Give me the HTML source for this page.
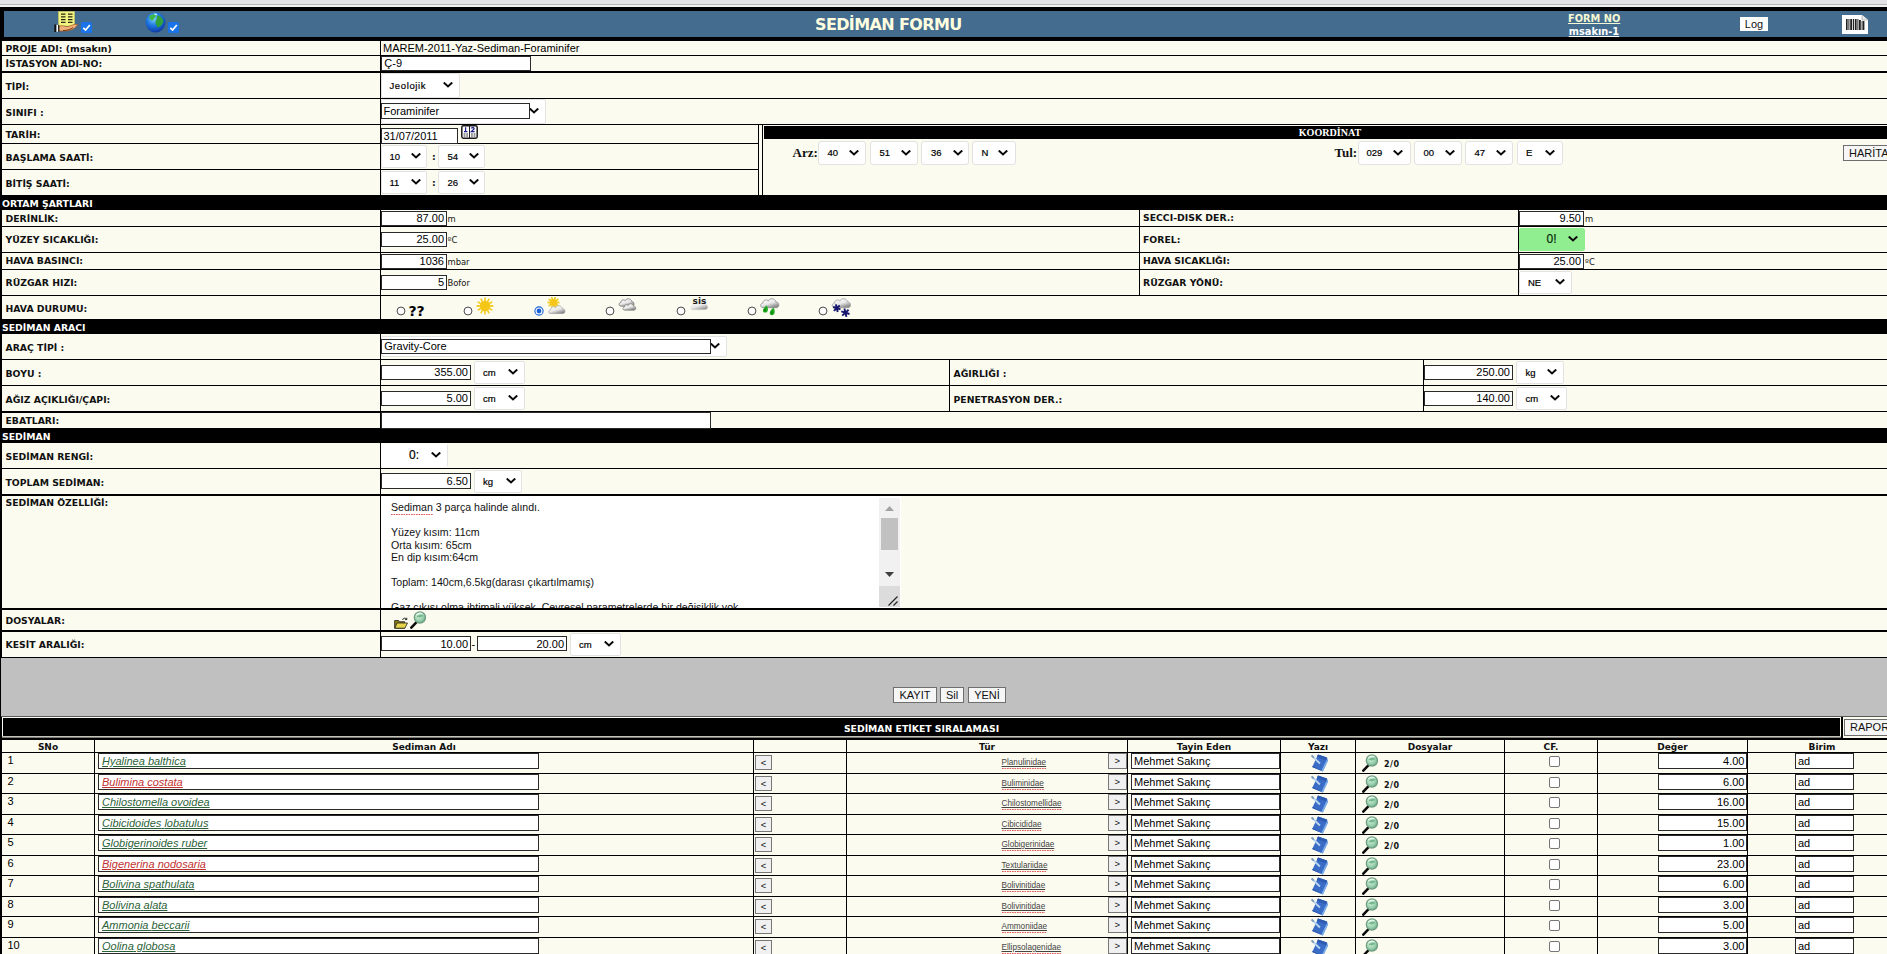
<!DOCTYPE html>
<html lang="tr"><head><meta charset="utf-8"><title>SEDİMAN FORMU</title>
<style>
html,body{margin:0;padding:0}
body{width:1887px;height:954px;overflow:hidden;background:#000;position:relative;font-family:"Liberation Sans",sans-serif;font-size:11px;color:#000}
div,svg.ic{position:absolute;box-sizing:content-box}
.c{background:#FBFBF0}
.t{white-space:nowrap}
.lb{font-family:"DejaVu Sans",sans-serif;font-weight:bold;font-size:9.3px;color:#111}
.bd{font-family:"DejaVu Sans",sans-serif;font-weight:bold;font-size:9.3px;color:#fff}
.th{font-family:"DejaVu Sans",sans-serif;font-weight:bold;font-size:9px;color:#111;text-align:center}
.un{font-family:"DejaVu Sans",sans-serif;font-size:8.4px;color:#111}
.fc{font-family:"DejaVu Sans",sans-serif;font-weight:bold;font-size:8px;color:#111;letter-spacing:0.55px}
.ttl{font-family:"DejaVu Sans",sans-serif;font-weight:bold;font-size:16px;letter-spacing:-0.62px;color:#ffffe0}
.fno{font-family:"DejaVu Sans Condensed","DejaVu Sans",sans-serif;font-stretch:condensed;font-weight:bold;font-size:10.9px;text-decoration:underline;width:52px;text-align:center}
.kd{font-family:"Liberation Serif",serif;font-weight:bold;font-size:10.1px;color:#fff}
.sb{font-family:"Liberation Serif",serif;font-weight:bold;font-size:13px;color:#111}
.qq{font-family:"DejaVu Sans",sans-serif;font-weight:bold;font-size:14px;color:#000}
.ar{font-size:11px}
.tur{font-size:8.2px;color:#444;text-decoration:underline}
.in{background:#fff;border:1px solid #2a2a2a;font-size:11px;padding:0 2px 0 1.5px;white-space:nowrap;overflow:hidden;box-sizing:border-box}
.in.it{font-style:italic}
.sp{text-decoration:underline;text-decoration-thickness:0.8px}
.g{color:#2c6238}.r{color:#c23030}
.sq{background:linear-gradient(90deg,#e25a5a 55%,transparent 55%) 0 100%/2.5px 1px repeat-x;padding-bottom:1.5px}
.sp.g,.sp.r{text-decoration:underline}
.sel{background:#fff;border:1px solid #e2e2e2;border-radius:2px;font-size:9.5px;color:#000;-webkit-text-stroke:0.2px #000}
.sel span{position:absolute;top:0}
.sel i{position:absolute;width:10px;height:6px;line-height:0}
.chv{display:block}
.btn{background:#f6f6f6;border:1px solid #6e6e6e;font-size:11px;text-align:center;color:#111;white-space:nowrap;overflow:hidden}
.btn.sm{font-size:9.5px;background:#f0f0f0;border-color:#777}
.cb{width:9px;height:9px;background:#fff;border:1px solid #767676;border-radius:2px}
.ta{background:#fff;font-size:10.6px;line-height:12.5px;padding:5px 0 0 10px;box-sizing:border-box;overflow:hidden;white-space:nowrap;color:#111}
.ic{line-height:0}
</style></head>
<body>
<div style="left:0px;top:0px;width:1887px;height:4px;background:#e3e3e5;"></div>
<div style="left:0px;top:4px;width:1887px;height:1px;background:#b6b6b6;"></div>
<div style="left:0px;top:5px;width:1887px;height:2px;background:#f0f0f0;"></div>
<div style="left:4px;top:11px;width:1883px;height:26px;background:#446C8F;"></div>
<div class="ic" style="left:54px;top:11px"><svg width="25" height="22" viewBox="0 0 25 22"><rect x="4.5" y="0.5" width="16" height="14.5" fill="#f3f382" stroke="#c9c95a" stroke-width="0.6"/><g stroke="#2a2a10" stroke-width="1.25"><path d="M7 3h4.5M14 3h4.5M7 5.8h4.5M14 5.8h4.5M7 8.6h4.5M14 8.6h4.5M7 11.4h4.5M14 11.4h4.5"/></g><path d="M5 15.5 C8 13.5 11 16 14 15.5 C17 15 20 12.5 23.5 13.5 C22 17 17 19.5 12 20 L5 20 Z" fill="#f0b27a" stroke="#a35a22" stroke-width="0.7"/><path d="M9 19.5 C13 19.8 17 18 19 16.5" stroke="#7a3a10" stroke-width="1" fill="none"/><rect x="0.3" y="13.5" width="2.2" height="7.5" fill="#111"/><rect x="2.5" y="13.8" width="1.6" height="7" fill="#fff"/><rect x="4.1" y="13.8" width="1.2" height="7" fill="#222"/></svg></div>
<div class="ic" style="left:81px;top:22px"><svg width="11" height="11" viewBox="0 0 11 11"><rect width="11" height="11" rx="1.5" fill="#1a73e8"/><path d="M2.3 5.8 L4.6 8 L8.8 3" fill="none" stroke="#fff" stroke-width="1.7"/></svg></div>
<div class="ic" style="left:145px;top:12px"><svg width="21" height="21" viewBox="0 0 21 21"><defs><radialGradient id="gg" cx="0.42" cy="0.32" r="0.75"><stop offset="0" stop-color="#7fd0ff"/><stop offset="0.45" stop-color="#1f78e0"/><stop offset="1" stop-color="#0a2f9a"/></radialGradient></defs><circle cx="10.5" cy="10.5" r="10" fill="url(#gg)"/><path d="M4 5 C6 2 10 1.5 12 3 C10.5 5 9 5.5 8.5 8 C7 9 5.5 8.5 4 5Z" fill="#3fb84a"/><path d="M12 4 C15 3 18 6 18.5 10 C17 13 15 15 12.5 15.5 C12 13 10 12 10.5 9.5 C11 7.5 12.5 6.5 12 4Z" fill="#2fa03c"/><path d="M9 1.8 C11 1.2 12.5 2 12 3.2 C10.5 3.5 9.5 3 9 1.8Z" fill="#b8f0ff"/></svg></div>
<div class="ic" style="left:168px;top:22px"><svg width="11" height="11" viewBox="0 0 11 11"><rect width="11" height="11" rx="1.5" fill="#1a73e8"/><path d="M2.3 5.8 L4.6 8 L8.8 3" fill="none" stroke="#fff" stroke-width="1.7"/></svg></div>
<div class="t ttl" style="left:815px;top:12px;height:26px;line-height:26px;">SEDİMAN FORMU</div>
<div class="t fno" style="left:1568px;top:12px;height:13px;line-height:13px;color:#f4f8d4">FORM NO</div>
<div class="t fno" style="left:1568px;top:25px;height:13px;line-height:13px;color:#fff">msakın-1</div>
<div class="btn" style="left:1740px;top:17px;width:28px;height:14px;line-height:14px;border:0;background:#fff">Log</div>
<div class="ic" style="left:1842px;top:15px"><svg width="26" height="19" viewBox="0 0 26 19"><rect width="26" height="19" fill="#fff"/><path d="M20 0 L26 5 L26 0Z" fill="#456D90"/><path d="M20 0 L20 5 L26 5" fill="#e8e8e8" stroke="#888" stroke-width="0.5"/><g fill="#222"><rect x="4" y="4" width="1.6" height="11"/><rect x="6.4" y="4" width="1" height="11"/><rect x="8.2" y="4" width="2" height="11"/><rect x="11" y="4" width="1" height="11"/><rect x="12.8" y="4" width="1.8" height="11"/><rect x="15.4" y="4" width="1" height="11"/><rect x="17" y="5" width="1.8" height="10"/><rect x="19.6" y="6" width="1" height="9"/><rect x="21" y="6" width="1.4" height="9"/></g></svg></div>
<div class="c" style="left:2px;top:41px;width:378px;height:14px"></div>
<div class="c" style="left:381px;top:41px;width:1506px;height:14px"></div>
<div class="t lb" style="left:5.5px;top:42px;height:14px;line-height:14px;">PROJE ADI: (msakın)</div>
<div class="t ar" style="left:383px;top:41px;height:14px;line-height:14px;">MAREM-2011-Yaz-Sediman-Foraminifer</div>
<div class="c" style="left:2px;top:56px;width:378px;height:15px"></div>
<div class="c" style="left:381px;top:56px;width:1506px;height:15px"></div>
<div class="t lb" style="left:5.5px;top:56px;height:15px;line-height:15px;">İSTASYON ADI-NO:</div>
<div class="in " style="left:381px;top:56px;width:150px;height:15px;line-height:13px;text-align:left;padding-left:2.3px">Ç-9</div>
<div class="c" style="left:2px;top:73px;width:378px;height:25px"></div>
<div class="c" style="left:381px;top:73px;width:1506px;height:25px"></div>
<div class="t lb" style="left:5.5px;top:74px;height:25px;line-height:25px;">TİPİ:</div>
<div class="sel" style="left:381px;top:73px;width:77px;height:23px;line-height:23px;background:#fff;"><span style="left:7.5px;letter-spacing:0.62px;">Jeolojik</span><i style="left:60.5px;top:8.3px"><svg class="chv" width="10" height="6" viewBox="0 0 10 6"><path d="M1.5 1.2 L5 4.5 L8.5 1.2" fill="none" stroke="#0a0a0a" stroke-width="2" stroke-linecap="square"/></svg></i></div>
<div class="c" style="left:2px;top:99px;width:378px;height:25px"></div>
<div class="c" style="left:381px;top:99px;width:1506px;height:25px"></div>
<div class="t lb" style="left:5.5px;top:100px;height:25px;line-height:25px;">SINIFI :</div>
<div class="sel" style="left:381px;top:99px;width:163px;height:23px;line-height:23px;background:#fff;"><span style="left:-382px;"></span><i style="left:146.5px;top:8.3px"><svg class="chv" width="10" height="6" viewBox="0 0 10 6"><path d="M1.5 1.2 L5 4.5 L8.5 1.2" fill="none" stroke="#0a0a0a" stroke-width="2" stroke-linecap="square"/></svg></i></div>
<div class="in " style="left:381px;top:103px;width:149px;height:16px;line-height:14px;text-align:left;">Foraminifer</div>
<div class="c" style="left:2px;top:125px;width:378px;height:18px"></div>
<div class="c" style="left:381px;top:125px;width:377px;height:18px"></div>
<div class="t lb" style="left:5.5px;top:126px;height:18px;line-height:18px;">TARİH:</div>
<div class="c" style="left:2px;top:144px;width:378px;height:25px"></div>
<div class="c" style="left:381px;top:144px;width:377px;height:25px"></div>
<div class="t lb" style="left:5.5px;top:145px;height:25px;line-height:25px;">BAŞLAMA SAATİ:</div>
<div class="c" style="left:2px;top:170px;width:378px;height:25px"></div>
<div class="c" style="left:381px;top:170px;width:377px;height:25px"></div>
<div class="t lb" style="left:5.5px;top:171px;height:25px;line-height:25px;">BİTİŞ SAATİ:</div>
<div class="c" style="left:759px;top:125px;width:3px;height:70px"></div>
<div class="c" style="left:763px;top:125px;width:1124px;height:70px"></div>
<div style="left:764px;top:126px;width:1123px;height:13px;background:#000;"></div>
<div class="t kd" style="left:764px;top:126px;height:13px;line-height:13px;width:1132px;text-align:center">KOORDİNAT</div>
<div class="in " style="left:381px;top:128px;width:77px;height:16px;line-height:14px;text-align:left;">31/07/2011</div>
<div class="ic" style="left:461px;top:125px"><svg width="17" height="14" viewBox="0 0 17 14"><rect x="0.8" y="0.8" width="15.4" height="12.4" rx="1.6" fill="#fff" stroke="#1a1a1a" stroke-width="1.5"/><path d="M8.5 1v12" stroke="#1a1a1a" stroke-width="1"/><g stroke="#1c1c8c" stroke-width="1.2" fill="none"><path d="M4.6 2.3v4.2M3 6.6h3.4M10.3 3.4c0.8-1.4 3.2-1 2.8 0.6l-2.8 2.6h3.3"/></g><g stroke="#333" stroke-width="1"><path d="M2.6 9h1.8M5.2 9h1.8M2.6 11h1.8M5.2 11h1.8M10 9h1.8M12.6 9h1.8M10 11h1.8M12.6 11h1.8"/></g></svg></div>
<div class="sel" style="left:381px;top:145px;width:44px;height:21px;line-height:21px;background:#fff;"><span style="left:7.5px;">10</span><i style="left:28.5px;top:7.3px"><svg class="chv" width="10" height="6" viewBox="0 0 10 6"><path d="M1.5 1.2 L5 4.5 L8.5 1.2" fill="none" stroke="#0a0a0a" stroke-width="2" stroke-linecap="square"/></svg></i></div>
<div class="t lb" style="left:432px;top:145px;height:23px;line-height:23px;">:</div>
<div class="sel" style="left:438px;top:145px;width:45px;height:21px;line-height:21px;background:#fff;"><span style="left:8.5px;">54</span><i style="left:29.5px;top:7.3px"><svg class="chv" width="10" height="6" viewBox="0 0 10 6"><path d="M1.5 1.2 L5 4.5 L8.5 1.2" fill="none" stroke="#0a0a0a" stroke-width="2" stroke-linecap="square"/></svg></i></div>
<div class="sel" style="left:381px;top:171px;width:44px;height:21px;line-height:21px;background:#fff;"><span style="left:7.5px;">11</span><i style="left:28.5px;top:7.3px"><svg class="chv" width="10" height="6" viewBox="0 0 10 6"><path d="M1.5 1.2 L5 4.5 L8.5 1.2" fill="none" stroke="#0a0a0a" stroke-width="2" stroke-linecap="square"/></svg></i></div>
<div class="t lb" style="left:432px;top:171px;height:23px;line-height:23px;">:</div>
<div class="sel" style="left:438px;top:171px;width:45px;height:21px;line-height:21px;background:#fff;"><span style="left:8.5px;">26</span><i style="left:29.5px;top:7.3px"><svg class="chv" width="10" height="6" viewBox="0 0 10 6"><path d="M1.5 1.2 L5 4.5 L8.5 1.2" fill="none" stroke="#0a0a0a" stroke-width="2" stroke-linecap="square"/></svg></i></div>
<div class="t sb" style="left:792.5px;top:141px;height:24px;line-height:24px;">Arz:</div>
<div class="sel" style="left:818px;top:141px;width:46px;height:22px;line-height:22px;background:#fff;border-radius:3px"><span style="left:8.5px;">40</span><i style="left:29.5px;top:7.8px"><svg class="chv" width="10" height="6" viewBox="0 0 10 6"><path d="M1.5 1.2 L5 4.5 L8.5 1.2" fill="none" stroke="#0a0a0a" stroke-width="2" stroke-linecap="square"/></svg></i></div>
<div class="sel" style="left:870px;top:141px;width:46px;height:22px;line-height:22px;background:#fff;border-radius:3px"><span style="left:8.5px;">51</span><i style="left:29.5px;top:7.8px"><svg class="chv" width="10" height="6" viewBox="0 0 10 6"><path d="M1.5 1.2 L5 4.5 L8.5 1.2" fill="none" stroke="#0a0a0a" stroke-width="2" stroke-linecap="square"/></svg></i></div>
<div class="sel" style="left:921px;top:141px;width:46px;height:22px;line-height:22px;background:#fff;border-radius:3px"><span style="left:9px;">36</span><i style="left:30.5px;top:7.8px"><svg class="chv" width="10" height="6" viewBox="0 0 10 6"><path d="M1.5 1.2 L5 4.5 L8.5 1.2" fill="none" stroke="#0a0a0a" stroke-width="2" stroke-linecap="square"/></svg></i></div>
<div class="sel" style="left:972px;top:141px;width:42px;height:22px;line-height:22px;background:#fff;border-radius:3px"><span style="left:8.5px;">N</span><i style="left:25px;top:7.8px"><svg class="chv" width="10" height="6" viewBox="0 0 10 6"><path d="M1.5 1.2 L5 4.5 L8.5 1.2" fill="none" stroke="#0a0a0a" stroke-width="2" stroke-linecap="square"/></svg></i></div>
<div class="t sb" style="left:1334.5px;top:141px;height:24px;line-height:24px;">Tul:</div>
<div class="sel" style="left:1358px;top:141px;width:51px;height:22px;line-height:22px;background:#fff;border-radius:3px"><span style="left:7.5px;">029</span><i style="left:34px;top:7.8px"><svg class="chv" width="10" height="6" viewBox="0 0 10 6"><path d="M1.5 1.2 L5 4.5 L8.5 1.2" fill="none" stroke="#0a0a0a" stroke-width="2" stroke-linecap="square"/></svg></i></div>
<div class="sel" style="left:1414px;top:141px;width:46px;height:22px;line-height:22px;background:#fff;border-radius:3px"><span style="left:8.5px;">00</span><i style="left:29.5px;top:7.8px"><svg class="chv" width="10" height="6" viewBox="0 0 10 6"><path d="M1.5 1.2 L5 4.5 L8.5 1.2" fill="none" stroke="#0a0a0a" stroke-width="2" stroke-linecap="square"/></svg></i></div>
<div class="sel" style="left:1465px;top:141px;width:46px;height:22px;line-height:22px;background:#fff;border-radius:3px"><span style="left:8.5px;">47</span><i style="left:29.5px;top:7.8px"><svg class="chv" width="10" height="6" viewBox="0 0 10 6"><path d="M1.5 1.2 L5 4.5 L8.5 1.2" fill="none" stroke="#0a0a0a" stroke-width="2" stroke-linecap="square"/></svg></i></div>
<div class="sel" style="left:1517px;top:141px;width:44px;height:22px;line-height:22px;background:#fff;border-radius:3px"><span style="left:8px;">E</span><i style="left:27px;top:7.8px"><svg class="chv" width="10" height="6" viewBox="0 0 10 6"><path d="M1.5 1.2 L5 4.5 L8.5 1.2" fill="none" stroke="#0a0a0a" stroke-width="2" stroke-linecap="square"/></svg></i></div>
<div class="btn" style="left:1843px;top:145px;width:60px;height:14px;line-height:14px;text-align:left;padding-left:5px">HARİTA</div>
<div class="t bd" style="left:2px;top:196px;height:15px;line-height:15px;">ORTAM ŞARTLARI</div>
<div class="c" style="left:2px;top:210px;width:378px;height:16px"></div>
<div class="c" style="left:381px;top:210px;width:758px;height:16px"></div>
<div class="c" style="left:1140px;top:210px;width:378px;height:16px"></div>
<div class="c" style="left:1519px;top:210px;width:368px;height:16px"></div>
<div class="t lb" style="left:5.5px;top:211px;height:16px;line-height:16px;">DERİNLİK:</div>
<div class="t lb" style="left:1143px;top:210px;height:16px;line-height:16px;">SECCI-DISK DER.:</div>
<div class="in " style="left:381px;top:211px;width:66px;height:15px;line-height:13px;text-align:right;">87.00</div>
<div class="t un" style="left:447.5px;top:211px;height:16px;line-height:16px;">m</div>
<div class="c" style="left:2px;top:227px;width:378px;height:25px"></div>
<div class="c" style="left:381px;top:227px;width:758px;height:25px"></div>
<div class="c" style="left:1140px;top:227px;width:378px;height:25px"></div>
<div class="c" style="left:1519px;top:227px;width:368px;height:25px"></div>
<div class="t lb" style="left:5.5px;top:227px;height:25px;line-height:25px;">YÜZEY SICAKLIĞI:</div>
<div class="t lb" style="left:1143px;top:227px;height:25px;line-height:25px;">FOREL:</div>
<div class="in " style="left:381px;top:232px;width:66px;height:15px;line-height:13px;text-align:right;">25.00</div>
<div class="t un" style="left:447.5px;top:232px;height:16px;line-height:16px;">ºC</div>
<div class="c" style="left:2px;top:253px;width:378px;height:16px"></div>
<div class="c" style="left:381px;top:253px;width:758px;height:16px"></div>
<div class="c" style="left:1140px;top:253px;width:378px;height:16px"></div>
<div class="c" style="left:1519px;top:253px;width:368px;height:16px"></div>
<div class="t lb" style="left:5.5px;top:253px;height:16px;line-height:16px;">HAVA BASINCI:</div>
<div class="t lb" style="left:1143px;top:253px;height:16px;line-height:16px;">HAVA SICAKLIĞI:</div>
<div class="in " style="left:381px;top:254px;width:66px;height:15px;line-height:13px;text-align:right;">1036</div>
<div class="t un" style="left:447.5px;top:254px;height:16px;line-height:16px;">mbar</div>
<div class="c" style="left:2px;top:270px;width:378px;height:25px"></div>
<div class="c" style="left:381px;top:270px;width:758px;height:25px"></div>
<div class="c" style="left:1140px;top:270px;width:378px;height:25px"></div>
<div class="c" style="left:1519px;top:270px;width:368px;height:25px"></div>
<div class="t lb" style="left:5.5px;top:270px;height:25px;line-height:25px;">RÜZGAR HIZI:</div>
<div class="t lb" style="left:1143px;top:270px;height:25px;line-height:25px;">RÜZGAR YÖNÜ:</div>
<div class="in " style="left:381px;top:275px;width:66px;height:15px;line-height:13px;text-align:right;">5</div>
<div class="t un" style="left:447.5px;top:275px;height:16px;line-height:16px;">Bofor</div>
<div class="in " style="left:1519px;top:211px;width:65px;height:15px;line-height:13px;text-align:right;">9.50</div>
<div class="t un" style="left:1585px;top:211px;height:16px;line-height:16px;">m</div>
<div class="sel" style="left:1519px;top:228px;width:64px;height:21px;line-height:21px;background:#90ee90;border-color:#90ee90"><span style="left:26.5px;font-size:12px;color:#0c3a0c;">0!</span><i style="left:47.5px;top:7.3px"><svg class="chv" width="10" height="6" viewBox="0 0 10 6"><path d="M1.5 1.2 L5 4.5 L8.5 1.2" fill="none" stroke="#0a0a0a" stroke-width="2" stroke-linecap="square"/></svg></i></div>
<div class="in " style="left:1519px;top:254px;width:65px;height:15px;line-height:13px;text-align:right;">25.00</div>
<div class="t un" style="left:1585px;top:254px;height:16px;line-height:16px;">ºC</div>
<div class="sel" style="left:1519px;top:271px;width:51px;height:21px;line-height:21px;background:#fff;"><span style="left:8px;">NE</span><i style="left:34.5px;top:7.3px"><svg class="chv" width="10" height="6" viewBox="0 0 10 6"><path d="M1.5 1.2 L5 4.5 L8.5 1.2" fill="none" stroke="#0a0a0a" stroke-width="2" stroke-linecap="square"/></svg></i></div>
<div class="c" style="left:2px;top:296px;width:378px;height:23px"></div>
<div class="c" style="left:381px;top:296px;width:1506px;height:23px"></div>
<div class="t lb" style="left:5.5px;top:297px;height:23px;line-height:23px;">HAVA DURUMU:</div>
<div class="t bd" style="left:2px;top:320px;height:15px;line-height:15px;">SEDİMAN ARACI</div>
<div class="c" style="left:2px;top:334px;width:378px;height:25px"></div>
<div class="c" style="left:381px;top:334px;width:1506px;height:25px"></div>
<div class="t lb" style="left:5.5px;top:335px;height:25px;line-height:25px;">ARAÇ TİPİ :</div>
<div class="sel" style="left:381px;top:336px;width:344px;height:19px;line-height:19px;background:#fff;"><span style="left:-382px;"></span><i style="left:328px;top:6.3px"><svg class="chv" width="10" height="6" viewBox="0 0 10 6"><path d="M1.5 1.2 L5 4.5 L8.5 1.2" fill="none" stroke="#0a0a0a" stroke-width="2" stroke-linecap="square"/></svg></i></div>
<div class="in " style="left:381px;top:339px;width:330px;height:15px;line-height:13px;text-align:left;padding-left:2.3px">Gravity-Core</div>
<div class="c" style="left:2px;top:360px;width:378px;height:25px"></div>
<div class="c" style="left:381px;top:360px;width:568px;height:25px"></div>
<div class="c" style="left:950px;top:360px;width:473px;height:25px"></div>
<div class="c" style="left:1424px;top:360px;width:463px;height:25px"></div>
<div class="t lb" style="left:5.5px;top:361px;height:25px;line-height:25px;">BOYU :</div>
<div class="t lb" style="left:953.5px;top:361px;height:25px;line-height:25px;">AĞIRLIĞI :</div>
<div class="in " style="left:381px;top:365px;width:90px;height:15px;line-height:13px;text-align:right;">355.00</div>
<div class="sel" style="left:474px;top:361px;width:49px;height:21px;line-height:21px;background:#fff;"><span style="left:8px;">cm</span><i style="left:32.5px;top:7.3px"><svg class="chv" width="10" height="6" viewBox="0 0 10 6"><path d="M1.5 1.2 L5 4.5 L8.5 1.2" fill="none" stroke="#0a0a0a" stroke-width="2" stroke-linecap="square"/></svg></i></div>
<div class="in " style="left:1424px;top:365px;width:89px;height:15px;line-height:13px;text-align:right;">250.00</div>
<div class="sel" style="left:1516px;top:361px;width:46px;height:21px;line-height:21px;background:#fff;"><span style="left:8.5px;">kg</span><i style="left:29.5px;top:7.3px"><svg class="chv" width="10" height="6" viewBox="0 0 10 6"><path d="M1.5 1.2 L5 4.5 L8.5 1.2" fill="none" stroke="#0a0a0a" stroke-width="2" stroke-linecap="square"/></svg></i></div>
<div class="c" style="left:2px;top:386px;width:378px;height:25px"></div>
<div class="c" style="left:381px;top:386px;width:568px;height:25px"></div>
<div class="c" style="left:950px;top:386px;width:473px;height:25px"></div>
<div class="c" style="left:1424px;top:386px;width:463px;height:25px"></div>
<div class="t lb" style="left:5.5px;top:387px;height:25px;line-height:25px;">AĞIZ AÇIKLIĞI/ÇAPI:</div>
<div class="t lb" style="left:953.5px;top:387px;height:25px;line-height:25px;">PENETRASYON DER.:</div>
<div class="in " style="left:381px;top:391px;width:90px;height:15px;line-height:13px;text-align:right;">5.00</div>
<div class="sel" style="left:474px;top:387px;width:49px;height:21px;line-height:21px;background:#fff;"><span style="left:8px;">cm</span><i style="left:32.5px;top:7.3px"><svg class="chv" width="10" height="6" viewBox="0 0 10 6"><path d="M1.5 1.2 L5 4.5 L8.5 1.2" fill="none" stroke="#0a0a0a" stroke-width="2" stroke-linecap="square"/></svg></i></div>
<div class="in " style="left:1424px;top:391px;width:89px;height:15px;line-height:13px;text-align:right;">140.00</div>
<div class="sel" style="left:1516px;top:387px;width:49px;height:21px;line-height:21px;background:#fff;"><span style="left:8.5px;">cm</span><i style="left:32.5px;top:7.3px"><svg class="chv" width="10" height="6" viewBox="0 0 10 6"><path d="M1.5 1.2 L5 4.5 L8.5 1.2" fill="none" stroke="#0a0a0a" stroke-width="2" stroke-linecap="square"/></svg></i></div>
<div class="c" style="left:2px;top:412px;width:378px;height:16px"></div>
<div class="c" style="left:381px;top:412px;width:1506px;height:16px"></div>
<div class="t lb" style="left:5.5px;top:413px;height:16px;line-height:16px;">EBATLARI:</div>
<div style="left:2px;top:412px;width:378px;height:1px;background:#000;"></div>
<div class="in " style="left:381px;top:412px;width:330px;height:17px;line-height:15px;text-align:left;"></div>
<div class="t bd" style="left:2px;top:429px;height:15px;line-height:15px;">SEDİMAN</div>
<div class="c" style="left:2px;top:443px;width:378px;height:25px"></div>
<div class="c" style="left:381px;top:443px;width:1506px;height:25px"></div>
<div class="t lb" style="left:5.5px;top:444px;height:25px;line-height:25px;">SEDİMAN RENGİ:</div>
<div class="sel" style="left:381px;top:444px;width:65px;height:21px;line-height:21px;background:#fff;border-color:#fff #e4e4e4 #fff #fff"><span style="left:27px;font-size:12px;">0:</span><i style="left:48.5px;top:7.3px"><svg class="chv" width="10" height="6" viewBox="0 0 10 6"><path d="M1.5 1.2 L5 4.5 L8.5 1.2" fill="none" stroke="#0a0a0a" stroke-width="2" stroke-linecap="square"/></svg></i></div>
<div class="c" style="left:2px;top:469px;width:378px;height:25px"></div>
<div class="c" style="left:381px;top:469px;width:1506px;height:25px"></div>
<div class="t lb" style="left:5.5px;top:470px;height:25px;line-height:25px;">TOPLAM SEDİMAN:</div>
<div class="in " style="left:381px;top:473px;width:90px;height:16px;line-height:14px;text-align:right;">6.50</div>
<div class="sel" style="left:474px;top:470px;width:46px;height:21px;line-height:21px;background:#fff;"><span style="left:8px;">kg</span><i style="left:30.5px;top:7.3px"><svg class="chv" width="10" height="6" viewBox="0 0 10 6"><path d="M1.5 1.2 L5 4.5 L8.5 1.2" fill="none" stroke="#0a0a0a" stroke-width="2" stroke-linecap="square"/></svg></i></div>
<div class="c" style="left:2px;top:496px;width:378px;height:112px"></div>
<div class="c" style="left:381px;top:496px;width:1506px;height:112px"></div>
<div class="t lb" style="left:5.5px;top:496px;height:13px;line-height:13px;">SEDİMAN ÖZELLİĞİ:</div>
<div class="ta" style="left:381px;top:496px;width:498px;height:112px"><span class="sq">Sediman</span> 3 parça halinde alındı.<br><br>Yüzey kısım: 11cm<br>Orta kısım: 65cm<br>En dip kısım:64cm<br><br>Toplam: 140cm,6.5kg(darası çıkartılmamış)<br><br>Gaz çıkışı olma ihtimali yüksek. Çevresel parametrelerde bir değişiklik yok.</div>
<div style="left:879px;top:496px;width:22px;height:112px;background:#fff;"></div>
<div style="left:879px;top:498px;width:21px;height:88px;background:#f1f1f1;"></div>
<div style="left:879px;top:586px;width:21px;height:21px;background:#dcdcdc;"></div>
<div style="left:881px;top:518px;width:17px;height:32px;background:#c1c1c1;"></div>
<svg class="ic" style="left:885px;top:506px" width="9" height="5" viewBox="0 0 9 5"><path d="M0 5 L4.5 0 L9 5Z" fill="#a3a3a3"/></svg>
<svg class="ic" style="left:885px;top:572px" width="9" height="5" viewBox="0 0 9 5"><path d="M0 0 L4.5 5 L9 0Z" fill="#404040"/></svg>
<svg class="ic" style="left:887px;top:595px" width="12" height="12" viewBox="0 0 12 12"><path d="M1.5 10.5 L10.5 1.5 M6.5 10.5 L10.5 6.5" stroke="#222" stroke-width="1.2" fill="none"/></svg>
<div class="c" style="left:2px;top:610px;width:378px;height:20px"></div>
<div class="c" style="left:381px;top:610px;width:1506px;height:20px"></div>
<div class="t lb" style="left:5.5px;top:611px;height:20px;line-height:20px;">DOSYALAR:</div>
<div class="c" style="left:2px;top:632px;width:378px;height:25px"></div>
<div class="c" style="left:381px;top:632px;width:1506px;height:25px"></div>
<div class="t lb" style="left:5.5px;top:632px;height:25px;line-height:25px;">KESİT ARALIĞI:</div>
<div class="in " style="left:381px;top:636px;width:90px;height:15px;line-height:13px;text-align:right;padding-top:1px">10.00</div>
<div class="t ar" style="left:471.5px;top:637px;height:15px;line-height:15px;">-</div>
<div class="in " style="left:477px;top:636px;width:90px;height:15px;line-height:13px;text-align:right;padding-top:1px">20.00</div>
<div class="sel" style="left:570px;top:633px;width:49px;height:21px;line-height:21px;background:#fff;"><span style="left:8px;">cm</span><i style="left:32.5px;top:7.3px"><svg class="chv" width="10" height="6" viewBox="0 0 10 6"><path d="M1.5 1.2 L5 4.5 L8.5 1.2" fill="none" stroke="#0a0a0a" stroke-width="2" stroke-linecap="square"/></svg></i></div>
<div style="left:1px;top:658px;width:1886px;height:58px;background:#c0c0c0;"></div>
<div class="btn" style="left:893px;top:687px;width:42px;height:14px;line-height:14px">KAYIT</div>
<div class="btn" style="left:940px;top:687px;width:22px;height:14px;line-height:14px">Sil</div>
<div class="btn" style="left:968px;top:687px;width:36px;height:14px;line-height:14px">YENİ</div>
<svg class="ic" style="left:395.5px;top:305.5px" width="10" height="10" viewBox="0 0 10 10"><circle cx="5" cy="5" r="3.95" fill="#fdfdfd" stroke="#4a4a4a" stroke-width="1"/></svg>
<div class="t qq" style="left:408.5px;top:302px;height:19px;line-height:19px;">??</div>
<svg class="ic" style="left:462.5px;top:305.5px" width="10" height="10" viewBox="0 0 10 10"><circle cx="5" cy="5" r="3.95" fill="#fdfdfd" stroke="#4a4a4a" stroke-width="1"/></svg>
<div class="ic" style="left:476px;top:297px"><svg width="18" height="18" viewBox="0 0 18 18"><path d="M13.7 9.0L17.4 9.0M13.1 11.3L16.3 13.2M11.4 13.1L13.2 16.3M9.0 13.7L9.0 17.4M6.7 13.1L4.8 16.3M4.9 11.3L1.7 13.2M4.3 9.0L0.6 9.0M4.9 6.7L1.7 4.8M6.6 4.9L4.8 1.7M9.0 4.3L9.0 0.6M11.4 4.9L13.2 1.7M13.1 6.6L16.3 4.8" stroke="#f2cf2e" stroke-width="1.8" fill="none"/><circle cx="9" cy="9" r="5.2" fill="#f5c518"/></svg></div>
<svg class="ic" style="left:533.5px;top:305.5px" width="10" height="10" viewBox="0 0 10 10"><circle cx="5" cy="5" r="4.1" fill="#fff" stroke="#1a62d6" stroke-width="1.1"/><circle cx="5" cy="5" r="2.4" fill="#1a62d6"/></svg>
<div class="ic" style="left:546px;top:297px"><svg width="21" height="17" viewBox="0 0 21 17"><defs><linearGradient id="cg" x1="0" y1="0" x2="0.6" y2="1"><stop offset="0" stop-color="#fff"/><stop offset="0.6" stop-color="#e8e8e8"/><stop offset="1" stop-color="#8a8a8a"/></linearGradient></defs><path d="M10.6 5.5L13.5 5.5M10.0 7.3L12.4 9.0M8.5 8.4L9.4 11.2M6.5 8.4L5.6 11.2M5.0 7.3L2.6 9.0M4.4 5.5L1.5 5.5M5.0 3.7L2.6 2.0M6.5 2.6L5.6 -0.2M8.5 2.6L9.4 -0.2M10.0 3.7L12.4 2.0" stroke="#f2cf2e" stroke-width="1.8" fill="none"/><circle cx="7.5" cy="5.5" r="3.6" fill="#f5c518"/><g transform="translate(1.5,1.2) scale(1.15)"><path d="M3 13.5 C0.5 13.5 0.3 10.3 2.8 9.9 C2.6 7.6 5.6 6.6 6.9 8.3 C8 5.6 12.4 5.9 12.9 9 C15.6 8.8 16.2 13.2 13.4 13.5 Z" fill="url(#cg)" stroke="#9a9a9a" stroke-width="0.5"/></g></svg></div>
<svg class="ic" style="left:604.5px;top:305.5px" width="10" height="10" viewBox="0 0 10 10"><circle cx="5" cy="5" r="3.95" fill="#fdfdfd" stroke="#4a4a4a" stroke-width="1"/></svg>
<div class="ic" style="left:617px;top:297px"><svg width="21" height="15" viewBox="0 0 21 15"><g transform="translate(1,-5) scale(1.05)"><path d="M3 13.5 C0.5 13.5 0.3 10.3 2.8 9.9 C2.6 7.6 5.6 6.6 6.9 8.3 C8 5.6 12.4 5.9 12.9 9 C15.6 8.8 16.2 13.2 13.4 13.5 Z" fill="url(#cg)" stroke="#777" stroke-width="0.8"/></g><g transform="translate(5,1) scale(0.9)"><path d="M3 13.5 C0.5 13.5 0.3 10.3 2.8 9.9 C2.6 7.6 5.6 6.6 6.9 8.3 C8 5.6 12.4 5.9 12.9 9 C15.6 8.8 16.2 13.2 13.4 13.5 Z" fill="url(#cg)" stroke="#777" stroke-width="0.8"/></g></svg></div>
<svg class="ic" style="left:675.5px;top:305.5px" width="10" height="10" viewBox="0 0 10 10"><circle cx="5" cy="5" r="3.95" fill="#fdfdfd" stroke="#4a4a4a" stroke-width="1"/></svg>
<div class="ic" style="left:688.5px;top:296px"><svg width="21" height="16" viewBox="0 0 21 16"><g transform="translate(0.5,-2.5) scale(1.2)"><path d="M3 13.5 C0.5 13.5 0.3 10.3 2.8 9.9 C2.6 7.6 5.6 6.6 6.9 8.3 C8 5.6 12.4 5.9 12.9 9 C15.6 8.8 16.2 13.2 13.4 13.5 Z" fill="url(#cg)" stroke="#d8d8d8" stroke-width="0.4" opacity="0.85"/></g><text x="10.5" y="8" text-anchor="middle" font-family="DejaVu Sans,sans-serif" font-weight="bold" font-size="9" fill="#222">sis</text></svg></div>
<svg class="ic" style="left:746.5px;top:305.5px" width="10" height="10" viewBox="0 0 10 10"><circle cx="5" cy="5" r="3.95" fill="#fdfdfd" stroke="#4a4a4a" stroke-width="1"/></svg>
<div class="ic" style="left:759px;top:297px"><svg width="22" height="19" viewBox="0 0 22 19"><g transform="translate(0.3,-6.6) scale(1.28)"><path d="M3 13.5 C0.5 13.5 0.3 10.3 2.8 9.9 C2.6 7.6 5.6 6.6 6.9 8.3 C8 5.6 12.4 5.9 12.9 9 C15.6 8.8 16.2 13.2 13.4 13.5 Z" fill="url(#cg)" stroke="#8a8a8a" stroke-width="0.6"/></g><g fill="#22aa22"><path d="M7.6 8.4 C9.6 10.6 9.6 15.6 6 15.6 C2.6 15.6 3.6 11 7.6 8.4Z"/><path d="M14.4 10.8 C16.4 13 16.4 18.2 12.8 18.2 C9.4 18.2 10.4 13.4 14.4 10.8Z"/></g><g fill="#128a12"><ellipse cx="6" cy="13" rx="1" ry="1.5"/><ellipse cx="12.8" cy="15.6" rx="1" ry="1.5"/></g></svg></div>
<svg class="ic" style="left:817.5px;top:305.5px" width="10" height="10" viewBox="0 0 10 10"><circle cx="5" cy="5" r="3.95" fill="#fdfdfd" stroke="#4a4a4a" stroke-width="1"/></svg>
<div class="ic" style="left:830px;top:297px"><svg width="23" height="21" viewBox="0 0 23 21"><g transform="translate(1,-6.6) scale(1.28)"><path d="M3 13.5 C0.5 13.5 0.3 10.3 2.8 9.9 C2.6 7.6 5.6 6.6 6.9 8.3 C8 5.6 12.4 5.9 12.9 9 C15.6 8.8 16.2 13.2 13.4 13.5 Z" fill="url(#cg)" stroke="#9a9a9a" stroke-width="0.6"/></g><path d="M3.1 10.0L10.5 12.4M5.9 7.4L7.7 15.0M9.7 8.5L3.9 13.9" stroke="#15156e" stroke-width="1.9" fill="none"/><path d="M11.3 14.4L19.5 17.0M14.4 11.5L16.4 19.9M18.6 12.8L12.2 18.6" stroke="#15156e" stroke-width="1.9" fill="none"/></svg></div>
<div class="ic" style="left:393.5px;top:616.5px"><svg width="14" height="12" viewBox="0 0 14 12"><path d="M0.6 3.5h4l1 1.2h5v6.5h-10z" fill="#8a7a10" stroke="#222" stroke-width="0.8"/><path d="M0.8 11.2 L3 6h10.5l-2.6 5.2z" fill="#e6d44a" stroke="#222" stroke-width="0.8"/><path d="M8.5 3c0.5-2 3-2.5 4-0.8M12.8 0.8v1.8h-1.8" stroke="#111" stroke-width="0.9" fill="none"/></svg></div>
<div class="ic" style="left:410px;top:610.5px"><svg width="17" height="18" viewBox="0 0 17 18"><defs><radialGradient id="mg" cx="0.4" cy="0.35" r="0.7"><stop offset="0" stop-color="#d4f2de"/><stop offset="0.6" stop-color="#9ad0ae"/><stop offset="1" stop-color="#6aa884"/></radialGradient></defs><path d="M6.8 10.8 L1.3 16.7" stroke="#0c0c0c" stroke-width="2.5" stroke-linecap="round"/><circle cx="9.9" cy="6.5" r="5.6" fill="url(#mg)" stroke="#6f9c80" stroke-width="1.2"/><path d="M6.6 6 C7.6 3.6 11.8 3 13.4 5.2 C11.8 4.9 10.6 7 8.6 6.2 C7.9 5.9 7.3 6.3 6.6 6Z" fill="#62aa7c" opacity="0.8"/><path d="M6 4.2 C7.2 2.2 10.6 1.6 12.6 2.9" stroke="#effff4" stroke-width="1" fill="none"/></svg></div>
<div style="left:1px;top:716px;width:1886px;height:1px;background:#5a5a5a;"></div>
<div style="left:2px;top:717px;width:1839px;height:1px;background:#FBFBF0;"></div>
<div style="left:2px;top:717px;width:1px;height:20px;background:#FBFBF0;"></div>
<div style="left:1840px;top:717px;width:1px;height:20px;background:#FBFBF0;"></div>
<div style="left:2px;top:736px;width:1839px;height:1px;background:#c4c4bc;"></div>
<div style="left:2px;top:737px;width:1839px;height:1px;background:#7a7a74;"></div>
<div style="left:1843px;top:717px;width:50px;height:21px;background:#FBFBF0;"></div>
<div class="btn" style="left:1844px;top:719px;width:60px;height:15px;line-height:15px;text-align:left;padding-left:5px">RAPOR</div>
<div class="t bd" style="left:3px;top:720px;height:18px;line-height:18px;width:1837px;text-align:center">SEDİMAN ETİKET SIRALAMASI</div>
<div class="c" style="left:2px;top:740px;width:92px;height:12px"></div>
<div class="t th" style="left:2px;top:741px;height:12px;line-height:12px;width:92px">SNo</div>
<div class="c" style="left:95px;top:740px;width:658px;height:12px"></div>
<div class="t th" style="left:95px;top:741px;height:12px;line-height:12px;width:658px">Sediman Adı</div>
<div class="c" style="left:754px;top:740px;width:92px;height:12px"></div>
<div class="c" style="left:847px;top:740px;width:280px;height:12px"></div>
<div class="t th" style="left:847px;top:741px;height:12px;line-height:12px;width:280px">Tür</div>
<div class="c" style="left:1128px;top:740px;width:152px;height:12px"></div>
<div class="t th" style="left:1128px;top:741px;height:12px;line-height:12px;width:152px">Tayin Eden</div>
<div class="c" style="left:1281px;top:740px;width:74px;height:12px"></div>
<div class="t th" style="left:1281px;top:741px;height:12px;line-height:12px;width:74px">Yazı</div>
<div class="c" style="left:1356px;top:740px;width:148px;height:12px"></div>
<div class="t th" style="left:1356px;top:741px;height:12px;line-height:12px;width:148px">Dosyalar</div>
<div class="c" style="left:1505px;top:740px;width:92px;height:12px"></div>
<div class="t th" style="left:1505px;top:741px;height:12px;line-height:12px;width:92px">CF.</div>
<div class="c" style="left:1598px;top:740px;width:149px;height:12px"></div>
<div class="t th" style="left:1598px;top:741px;height:12px;line-height:12px;width:149px">Değer</div>
<div class="c" style="left:1748px;top:740px;width:148px;height:12px"></div>
<div class="t th" style="left:1748px;top:741px;height:12px;line-height:12px;width:148px">Birim</div>
<div class="c" style="left:2px;top:753px;width:92px;height:20px"></div>
<div class="c" style="left:95px;top:753px;width:658px;height:20px"></div>
<div class="c" style="left:754px;top:753px;width:92px;height:20px"></div>
<div class="c" style="left:847px;top:753px;width:280px;height:20px"></div>
<div class="c" style="left:1128px;top:753px;width:152px;height:20px"></div>
<div class="c" style="left:1281px;top:753px;width:74px;height:20px"></div>
<div class="c" style="left:1356px;top:753px;width:148px;height:20px"></div>
<div class="c" style="left:1505px;top:753px;width:92px;height:20px"></div>
<div class="c" style="left:1598px;top:753px;width:149px;height:20px"></div>
<div class="c" style="left:1748px;top:753px;width:148px;height:20px"></div>
<div class="t ar" style="left:7.5px;top:754px;height:13px;line-height:13px;">1</div>
<div class="in it" style="left:98px;top:753px;width:441px;height:16px;line-height:14px;text-align:left;padding-left:3px"><span class="sp g"><span class="sq">Hyalinea</span> <span class="sq">balthica</span></span></div>
<div class="btn sm" style="left:755px;top:755px;width:15px;height:13px;line-height:13px">&lt;</div>
<div class="t tur" style="left:1001.5px;top:756px;height:14px;line-height:14px;"><span class="sq">Planulinidae</span></div>
<div class="btn sm" style="left:1108px;top:753px;width:16.5px;height:13.5px;line-height:13px">&gt;</div>
<div class="in " style="left:1131px;top:753px;width:149px;height:16px;line-height:14px;text-align:left;padding-left:2px">Mehmet <span class="sq">Sakınç</span></div>
<div class="ic" style="left:1311px;top:754px"><svg width="18" height="18" viewBox="0 0 18 18"><path d="M7 0.4 L16 3.5 L16.8 7 L11.8 17.4 L1.2 13 L4.4 6.3 Z" fill="#3b6dc7"/><path d="M16 3.5 L16.8 7 L11.8 17.4 L10.4 16.8 L15.3 6.4 Z" fill="#7db0ec"/><path d="M7 0.4 L16 3.5 L15.3 6.4 L5.8 3 Z" fill="#2e5cb2"/><path d="M1.2 13 L11.8 17.4 L10.4 16.8 L1.8 12 Z" fill="#2a55a8"/><path d="M0.8 1.6 L8.9 9.5" stroke="#b8d6f2" stroke-width="1.9"/><path d="M0.6 1.4 L2.8 3.6" stroke="#7e9cba" stroke-width="1.9"/></svg></div>
<div class="ic" style="left:1362px;top:754px"><svg width="17" height="18" viewBox="0 0 17 18"><defs><radialGradient id="mg" cx="0.4" cy="0.35" r="0.7"><stop offset="0" stop-color="#d4f2de"/><stop offset="0.6" stop-color="#9ad0ae"/><stop offset="1" stop-color="#6aa884"/></radialGradient></defs><path d="M6.8 10.8 L1.3 16.7" stroke="#0c0c0c" stroke-width="2.5" stroke-linecap="round"/><circle cx="9.9" cy="6.5" r="5.6" fill="url(#mg)" stroke="#6f9c80" stroke-width="1.2"/><path d="M6.6 6 C7.6 3.6 11.8 3 13.4 5.2 C11.8 4.9 10.6 7 8.6 6.2 C7.9 5.9 7.3 6.3 6.6 6Z" fill="#62aa7c" opacity="0.8"/><path d="M6 4.2 C7.2 2.2 10.6 1.6 12.6 2.9" stroke="#effff4" stroke-width="1" fill="none"/></svg></div>
<div class="t fc" style="left:1384px;top:760px;height:10px;line-height:10px;">2/0</div>
<div class="cb" style="left:1549px;top:756px"></div>
<div class="in " style="left:1658px;top:753px;width:89px;height:16px;line-height:14px;text-align:right;padding-right:1.5px">4.00</div>
<div class="in " style="left:1795px;top:753px;width:59px;height:16px;line-height:14px;text-align:left;padding-left:2px">ad</div>
<div class="c" style="left:2px;top:774px;width:92px;height:19px"></div>
<div class="c" style="left:95px;top:774px;width:658px;height:19px"></div>
<div class="c" style="left:754px;top:774px;width:92px;height:19px"></div>
<div class="c" style="left:847px;top:774px;width:280px;height:19px"></div>
<div class="c" style="left:1128px;top:774px;width:152px;height:19px"></div>
<div class="c" style="left:1281px;top:774px;width:74px;height:19px"></div>
<div class="c" style="left:1356px;top:774px;width:148px;height:19px"></div>
<div class="c" style="left:1505px;top:774px;width:92px;height:19px"></div>
<div class="c" style="left:1598px;top:774px;width:149px;height:19px"></div>
<div class="c" style="left:1748px;top:774px;width:148px;height:19px"></div>
<div class="t ar" style="left:7.5px;top:775px;height:13px;line-height:13px;">2</div>
<div class="in it" style="left:98px;top:774px;width:441px;height:16px;line-height:14px;text-align:left;padding-left:3px"><span class="sp r"><span class="sq">Bulimina</span> <span class="sq">costata</span></span></div>
<div class="btn sm" style="left:755px;top:776px;width:15px;height:13px;line-height:13px">&lt;</div>
<div class="t tur" style="left:1001.5px;top:777px;height:14px;line-height:14px;"><span class="sq">Buliminidae</span></div>
<div class="btn sm" style="left:1108px;top:774px;width:16.5px;height:13.5px;line-height:13px">&gt;</div>
<div class="in " style="left:1131px;top:774px;width:149px;height:16px;line-height:14px;text-align:left;padding-left:2px">Mehmet <span class="sq">Sakınç</span></div>
<div class="ic" style="left:1311px;top:775px"><svg width="18" height="18" viewBox="0 0 18 18"><path d="M7 0.4 L16 3.5 L16.8 7 L11.8 17.4 L1.2 13 L4.4 6.3 Z" fill="#3b6dc7"/><path d="M16 3.5 L16.8 7 L11.8 17.4 L10.4 16.8 L15.3 6.4 Z" fill="#7db0ec"/><path d="M7 0.4 L16 3.5 L15.3 6.4 L5.8 3 Z" fill="#2e5cb2"/><path d="M1.2 13 L11.8 17.4 L10.4 16.8 L1.8 12 Z" fill="#2a55a8"/><path d="M0.8 1.6 L8.9 9.5" stroke="#b8d6f2" stroke-width="1.9"/><path d="M0.6 1.4 L2.8 3.6" stroke="#7e9cba" stroke-width="1.9"/></svg></div>
<div class="ic" style="left:1362px;top:775px"><svg width="17" height="18" viewBox="0 0 17 18"><defs><radialGradient id="mg" cx="0.4" cy="0.35" r="0.7"><stop offset="0" stop-color="#d4f2de"/><stop offset="0.6" stop-color="#9ad0ae"/><stop offset="1" stop-color="#6aa884"/></radialGradient></defs><path d="M6.8 10.8 L1.3 16.7" stroke="#0c0c0c" stroke-width="2.5" stroke-linecap="round"/><circle cx="9.9" cy="6.5" r="5.6" fill="url(#mg)" stroke="#6f9c80" stroke-width="1.2"/><path d="M6.6 6 C7.6 3.6 11.8 3 13.4 5.2 C11.8 4.9 10.6 7 8.6 6.2 C7.9 5.9 7.3 6.3 6.6 6Z" fill="#62aa7c" opacity="0.8"/><path d="M6 4.2 C7.2 2.2 10.6 1.6 12.6 2.9" stroke="#effff4" stroke-width="1" fill="none"/></svg></div>
<div class="t fc" style="left:1384px;top:781px;height:10px;line-height:10px;">2/0</div>
<div class="cb" style="left:1549px;top:777px"></div>
<div class="in " style="left:1658px;top:774px;width:89px;height:16px;line-height:14px;text-align:right;padding-right:1.5px">6.00</div>
<div class="in " style="left:1795px;top:774px;width:59px;height:16px;line-height:14px;text-align:left;padding-left:2px">ad</div>
<div class="c" style="left:2px;top:794px;width:92px;height:20px"></div>
<div class="c" style="left:95px;top:794px;width:658px;height:20px"></div>
<div class="c" style="left:754px;top:794px;width:92px;height:20px"></div>
<div class="c" style="left:847px;top:794px;width:280px;height:20px"></div>
<div class="c" style="left:1128px;top:794px;width:152px;height:20px"></div>
<div class="c" style="left:1281px;top:794px;width:74px;height:20px"></div>
<div class="c" style="left:1356px;top:794px;width:148px;height:20px"></div>
<div class="c" style="left:1505px;top:794px;width:92px;height:20px"></div>
<div class="c" style="left:1598px;top:794px;width:149px;height:20px"></div>
<div class="c" style="left:1748px;top:794px;width:148px;height:20px"></div>
<div class="t ar" style="left:7.5px;top:795px;height:13px;line-height:13px;">3</div>
<div class="in it" style="left:98px;top:794px;width:441px;height:16px;line-height:14px;text-align:left;padding-left:3px"><span class="sp g"><span class="sq">Chilostomella</span> <span class="sq">ovoidea</span></span></div>
<div class="btn sm" style="left:755px;top:796px;width:15px;height:13px;line-height:13px">&lt;</div>
<div class="t tur" style="left:1001.5px;top:797px;height:14px;line-height:14px;"><span class="sq">Chilostomellidae</span></div>
<div class="btn sm" style="left:1108px;top:794px;width:16.5px;height:13.5px;line-height:13px">&gt;</div>
<div class="in " style="left:1131px;top:794px;width:149px;height:16px;line-height:14px;text-align:left;padding-left:2px">Mehmet <span class="sq">Sakınç</span></div>
<div class="ic" style="left:1311px;top:795px"><svg width="18" height="18" viewBox="0 0 18 18"><path d="M7 0.4 L16 3.5 L16.8 7 L11.8 17.4 L1.2 13 L4.4 6.3 Z" fill="#3b6dc7"/><path d="M16 3.5 L16.8 7 L11.8 17.4 L10.4 16.8 L15.3 6.4 Z" fill="#7db0ec"/><path d="M7 0.4 L16 3.5 L15.3 6.4 L5.8 3 Z" fill="#2e5cb2"/><path d="M1.2 13 L11.8 17.4 L10.4 16.8 L1.8 12 Z" fill="#2a55a8"/><path d="M0.8 1.6 L8.9 9.5" stroke="#b8d6f2" stroke-width="1.9"/><path d="M0.6 1.4 L2.8 3.6" stroke="#7e9cba" stroke-width="1.9"/></svg></div>
<div class="ic" style="left:1362px;top:795px"><svg width="17" height="18" viewBox="0 0 17 18"><defs><radialGradient id="mg" cx="0.4" cy="0.35" r="0.7"><stop offset="0" stop-color="#d4f2de"/><stop offset="0.6" stop-color="#9ad0ae"/><stop offset="1" stop-color="#6aa884"/></radialGradient></defs><path d="M6.8 10.8 L1.3 16.7" stroke="#0c0c0c" stroke-width="2.5" stroke-linecap="round"/><circle cx="9.9" cy="6.5" r="5.6" fill="url(#mg)" stroke="#6f9c80" stroke-width="1.2"/><path d="M6.6 6 C7.6 3.6 11.8 3 13.4 5.2 C11.8 4.9 10.6 7 8.6 6.2 C7.9 5.9 7.3 6.3 6.6 6Z" fill="#62aa7c" opacity="0.8"/><path d="M6 4.2 C7.2 2.2 10.6 1.6 12.6 2.9" stroke="#effff4" stroke-width="1" fill="none"/></svg></div>
<div class="t fc" style="left:1384px;top:801px;height:10px;line-height:10px;">2/0</div>
<div class="cb" style="left:1549px;top:797px"></div>
<div class="in " style="left:1658px;top:794px;width:89px;height:16px;line-height:14px;text-align:right;padding-right:1.5px">16.00</div>
<div class="in " style="left:1795px;top:794px;width:59px;height:16px;line-height:14px;text-align:left;padding-left:2px">ad</div>
<div class="c" style="left:2px;top:815px;width:92px;height:19px"></div>
<div class="c" style="left:95px;top:815px;width:658px;height:19px"></div>
<div class="c" style="left:754px;top:815px;width:92px;height:19px"></div>
<div class="c" style="left:847px;top:815px;width:280px;height:19px"></div>
<div class="c" style="left:1128px;top:815px;width:152px;height:19px"></div>
<div class="c" style="left:1281px;top:815px;width:74px;height:19px"></div>
<div class="c" style="left:1356px;top:815px;width:148px;height:19px"></div>
<div class="c" style="left:1505px;top:815px;width:92px;height:19px"></div>
<div class="c" style="left:1598px;top:815px;width:149px;height:19px"></div>
<div class="c" style="left:1748px;top:815px;width:148px;height:19px"></div>
<div class="t ar" style="left:7.5px;top:816px;height:13px;line-height:13px;">4</div>
<div class="in it" style="left:98px;top:815px;width:441px;height:16px;line-height:14px;text-align:left;padding-left:3px"><span class="sp g"><span class="sq">Cibicidoides</span> <span class="sq">lobatulus</span></span></div>
<div class="btn sm" style="left:755px;top:817px;width:15px;height:13px;line-height:13px">&lt;</div>
<div class="t tur" style="left:1001.5px;top:818px;height:14px;line-height:14px;"><span class="sq">Cibicididae</span></div>
<div class="btn sm" style="left:1108px;top:815px;width:16.5px;height:13.5px;line-height:13px">&gt;</div>
<div class="in " style="left:1131px;top:815px;width:149px;height:16px;line-height:14px;text-align:left;padding-left:2px">Mehmet <span class="sq">Sakınç</span></div>
<div class="ic" style="left:1311px;top:816px"><svg width="18" height="18" viewBox="0 0 18 18"><path d="M7 0.4 L16 3.5 L16.8 7 L11.8 17.4 L1.2 13 L4.4 6.3 Z" fill="#3b6dc7"/><path d="M16 3.5 L16.8 7 L11.8 17.4 L10.4 16.8 L15.3 6.4 Z" fill="#7db0ec"/><path d="M7 0.4 L16 3.5 L15.3 6.4 L5.8 3 Z" fill="#2e5cb2"/><path d="M1.2 13 L11.8 17.4 L10.4 16.8 L1.8 12 Z" fill="#2a55a8"/><path d="M0.8 1.6 L8.9 9.5" stroke="#b8d6f2" stroke-width="1.9"/><path d="M0.6 1.4 L2.8 3.6" stroke="#7e9cba" stroke-width="1.9"/></svg></div>
<div class="ic" style="left:1362px;top:816px"><svg width="17" height="18" viewBox="0 0 17 18"><defs><radialGradient id="mg" cx="0.4" cy="0.35" r="0.7"><stop offset="0" stop-color="#d4f2de"/><stop offset="0.6" stop-color="#9ad0ae"/><stop offset="1" stop-color="#6aa884"/></radialGradient></defs><path d="M6.8 10.8 L1.3 16.7" stroke="#0c0c0c" stroke-width="2.5" stroke-linecap="round"/><circle cx="9.9" cy="6.5" r="5.6" fill="url(#mg)" stroke="#6f9c80" stroke-width="1.2"/><path d="M6.6 6 C7.6 3.6 11.8 3 13.4 5.2 C11.8 4.9 10.6 7 8.6 6.2 C7.9 5.9 7.3 6.3 6.6 6Z" fill="#62aa7c" opacity="0.8"/><path d="M6 4.2 C7.2 2.2 10.6 1.6 12.6 2.9" stroke="#effff4" stroke-width="1" fill="none"/></svg></div>
<div class="t fc" style="left:1384px;top:822px;height:10px;line-height:10px;">2/0</div>
<div class="cb" style="left:1549px;top:818px"></div>
<div class="in " style="left:1658px;top:815px;width:89px;height:16px;line-height:14px;text-align:right;padding-right:1.5px">15.00</div>
<div class="in " style="left:1795px;top:815px;width:59px;height:16px;line-height:14px;text-align:left;padding-left:2px">ad</div>
<div class="c" style="left:2px;top:835px;width:92px;height:20px"></div>
<div class="c" style="left:95px;top:835px;width:658px;height:20px"></div>
<div class="c" style="left:754px;top:835px;width:92px;height:20px"></div>
<div class="c" style="left:847px;top:835px;width:280px;height:20px"></div>
<div class="c" style="left:1128px;top:835px;width:152px;height:20px"></div>
<div class="c" style="left:1281px;top:835px;width:74px;height:20px"></div>
<div class="c" style="left:1356px;top:835px;width:148px;height:20px"></div>
<div class="c" style="left:1505px;top:835px;width:92px;height:20px"></div>
<div class="c" style="left:1598px;top:835px;width:149px;height:20px"></div>
<div class="c" style="left:1748px;top:835px;width:148px;height:20px"></div>
<div class="t ar" style="left:7.5px;top:836px;height:13px;line-height:13px;">5</div>
<div class="in it" style="left:98px;top:835px;width:441px;height:16px;line-height:14px;text-align:left;padding-left:3px"><span class="sp g"><span class="sq">Globigerinoides</span> <span class="sq">ruber</span></span></div>
<div class="btn sm" style="left:755px;top:837px;width:15px;height:13px;line-height:13px">&lt;</div>
<div class="t tur" style="left:1001.5px;top:838px;height:14px;line-height:14px;"><span class="sq">Globigerinidae</span></div>
<div class="btn sm" style="left:1108px;top:835px;width:16.5px;height:13.5px;line-height:13px">&gt;</div>
<div class="in " style="left:1131px;top:835px;width:149px;height:16px;line-height:14px;text-align:left;padding-left:2px">Mehmet <span class="sq">Sakınç</span></div>
<div class="ic" style="left:1311px;top:836px"><svg width="18" height="18" viewBox="0 0 18 18"><path d="M7 0.4 L16 3.5 L16.8 7 L11.8 17.4 L1.2 13 L4.4 6.3 Z" fill="#3b6dc7"/><path d="M16 3.5 L16.8 7 L11.8 17.4 L10.4 16.8 L15.3 6.4 Z" fill="#7db0ec"/><path d="M7 0.4 L16 3.5 L15.3 6.4 L5.8 3 Z" fill="#2e5cb2"/><path d="M1.2 13 L11.8 17.4 L10.4 16.8 L1.8 12 Z" fill="#2a55a8"/><path d="M0.8 1.6 L8.9 9.5" stroke="#b8d6f2" stroke-width="1.9"/><path d="M0.6 1.4 L2.8 3.6" stroke="#7e9cba" stroke-width="1.9"/></svg></div>
<div class="ic" style="left:1362px;top:836px"><svg width="17" height="18" viewBox="0 0 17 18"><defs><radialGradient id="mg" cx="0.4" cy="0.35" r="0.7"><stop offset="0" stop-color="#d4f2de"/><stop offset="0.6" stop-color="#9ad0ae"/><stop offset="1" stop-color="#6aa884"/></radialGradient></defs><path d="M6.8 10.8 L1.3 16.7" stroke="#0c0c0c" stroke-width="2.5" stroke-linecap="round"/><circle cx="9.9" cy="6.5" r="5.6" fill="url(#mg)" stroke="#6f9c80" stroke-width="1.2"/><path d="M6.6 6 C7.6 3.6 11.8 3 13.4 5.2 C11.8 4.9 10.6 7 8.6 6.2 C7.9 5.9 7.3 6.3 6.6 6Z" fill="#62aa7c" opacity="0.8"/><path d="M6 4.2 C7.2 2.2 10.6 1.6 12.6 2.9" stroke="#effff4" stroke-width="1" fill="none"/></svg></div>
<div class="t fc" style="left:1384px;top:842px;height:10px;line-height:10px;">2/0</div>
<div class="cb" style="left:1549px;top:838px"></div>
<div class="in " style="left:1658px;top:835px;width:89px;height:16px;line-height:14px;text-align:right;padding-right:1.5px">1.00</div>
<div class="in " style="left:1795px;top:835px;width:59px;height:16px;line-height:14px;text-align:left;padding-left:2px">ad</div>
<div class="c" style="left:2px;top:856px;width:92px;height:19px"></div>
<div class="c" style="left:95px;top:856px;width:658px;height:19px"></div>
<div class="c" style="left:754px;top:856px;width:92px;height:19px"></div>
<div class="c" style="left:847px;top:856px;width:280px;height:19px"></div>
<div class="c" style="left:1128px;top:856px;width:152px;height:19px"></div>
<div class="c" style="left:1281px;top:856px;width:74px;height:19px"></div>
<div class="c" style="left:1356px;top:856px;width:148px;height:19px"></div>
<div class="c" style="left:1505px;top:856px;width:92px;height:19px"></div>
<div class="c" style="left:1598px;top:856px;width:149px;height:19px"></div>
<div class="c" style="left:1748px;top:856px;width:148px;height:19px"></div>
<div class="t ar" style="left:7.5px;top:857px;height:13px;line-height:13px;">6</div>
<div class="in it" style="left:98px;top:856px;width:441px;height:16px;line-height:14px;text-align:left;padding-left:3px"><span class="sp r"><span class="sq">Bigenerina</span> <span class="sq">nodosaria</span></span></div>
<div class="btn sm" style="left:755px;top:858px;width:15px;height:13px;line-height:13px">&lt;</div>
<div class="t tur" style="left:1001.5px;top:859px;height:14px;line-height:14px;"><span class="sq">Textulariidae</span></div>
<div class="btn sm" style="left:1108px;top:856px;width:16.5px;height:13.5px;line-height:13px">&gt;</div>
<div class="in " style="left:1131px;top:856px;width:149px;height:16px;line-height:14px;text-align:left;padding-left:2px">Mehmet <span class="sq">Sakınç</span></div>
<div class="ic" style="left:1311px;top:857px"><svg width="18" height="18" viewBox="0 0 18 18"><path d="M7 0.4 L16 3.5 L16.8 7 L11.8 17.4 L1.2 13 L4.4 6.3 Z" fill="#3b6dc7"/><path d="M16 3.5 L16.8 7 L11.8 17.4 L10.4 16.8 L15.3 6.4 Z" fill="#7db0ec"/><path d="M7 0.4 L16 3.5 L15.3 6.4 L5.8 3 Z" fill="#2e5cb2"/><path d="M1.2 13 L11.8 17.4 L10.4 16.8 L1.8 12 Z" fill="#2a55a8"/><path d="M0.8 1.6 L8.9 9.5" stroke="#b8d6f2" stroke-width="1.9"/><path d="M0.6 1.4 L2.8 3.6" stroke="#7e9cba" stroke-width="1.9"/></svg></div>
<div class="ic" style="left:1362px;top:857px"><svg width="17" height="18" viewBox="0 0 17 18"><defs><radialGradient id="mg" cx="0.4" cy="0.35" r="0.7"><stop offset="0" stop-color="#d4f2de"/><stop offset="0.6" stop-color="#9ad0ae"/><stop offset="1" stop-color="#6aa884"/></radialGradient></defs><path d="M6.8 10.8 L1.3 16.7" stroke="#0c0c0c" stroke-width="2.5" stroke-linecap="round"/><circle cx="9.9" cy="6.5" r="5.6" fill="url(#mg)" stroke="#6f9c80" stroke-width="1.2"/><path d="M6.6 6 C7.6 3.6 11.8 3 13.4 5.2 C11.8 4.9 10.6 7 8.6 6.2 C7.9 5.9 7.3 6.3 6.6 6Z" fill="#62aa7c" opacity="0.8"/><path d="M6 4.2 C7.2 2.2 10.6 1.6 12.6 2.9" stroke="#effff4" stroke-width="1" fill="none"/></svg></div>
<div class="cb" style="left:1549px;top:859px"></div>
<div class="in " style="left:1658px;top:856px;width:89px;height:16px;line-height:14px;text-align:right;padding-right:1.5px">23.00</div>
<div class="in " style="left:1795px;top:856px;width:59px;height:16px;line-height:14px;text-align:left;padding-left:2px">ad</div>
<div class="c" style="left:2px;top:876px;width:92px;height:20px"></div>
<div class="c" style="left:95px;top:876px;width:658px;height:20px"></div>
<div class="c" style="left:754px;top:876px;width:92px;height:20px"></div>
<div class="c" style="left:847px;top:876px;width:280px;height:20px"></div>
<div class="c" style="left:1128px;top:876px;width:152px;height:20px"></div>
<div class="c" style="left:1281px;top:876px;width:74px;height:20px"></div>
<div class="c" style="left:1356px;top:876px;width:148px;height:20px"></div>
<div class="c" style="left:1505px;top:876px;width:92px;height:20px"></div>
<div class="c" style="left:1598px;top:876px;width:149px;height:20px"></div>
<div class="c" style="left:1748px;top:876px;width:148px;height:20px"></div>
<div class="t ar" style="left:7.5px;top:877px;height:13px;line-height:13px;">7</div>
<div class="in it" style="left:98px;top:876px;width:441px;height:16px;line-height:14px;text-align:left;padding-left:3px"><span class="sp g"><span class="sq">Bolivina</span> spathulata</span></div>
<div class="btn sm" style="left:755px;top:878px;width:15px;height:13px;line-height:13px">&lt;</div>
<div class="t tur" style="left:1001.5px;top:879px;height:14px;line-height:14px;"><span class="sq">Bolivinitidae</span></div>
<div class="btn sm" style="left:1108px;top:876px;width:16.5px;height:13.5px;line-height:13px">&gt;</div>
<div class="in " style="left:1131px;top:876px;width:149px;height:16px;line-height:14px;text-align:left;padding-left:2px">Mehmet <span class="sq">Sakınç</span></div>
<div class="ic" style="left:1311px;top:877px"><svg width="18" height="18" viewBox="0 0 18 18"><path d="M7 0.4 L16 3.5 L16.8 7 L11.8 17.4 L1.2 13 L4.4 6.3 Z" fill="#3b6dc7"/><path d="M16 3.5 L16.8 7 L11.8 17.4 L10.4 16.8 L15.3 6.4 Z" fill="#7db0ec"/><path d="M7 0.4 L16 3.5 L15.3 6.4 L5.8 3 Z" fill="#2e5cb2"/><path d="M1.2 13 L11.8 17.4 L10.4 16.8 L1.8 12 Z" fill="#2a55a8"/><path d="M0.8 1.6 L8.9 9.5" stroke="#b8d6f2" stroke-width="1.9"/><path d="M0.6 1.4 L2.8 3.6" stroke="#7e9cba" stroke-width="1.9"/></svg></div>
<div class="ic" style="left:1362px;top:877px"><svg width="17" height="18" viewBox="0 0 17 18"><defs><radialGradient id="mg" cx="0.4" cy="0.35" r="0.7"><stop offset="0" stop-color="#d4f2de"/><stop offset="0.6" stop-color="#9ad0ae"/><stop offset="1" stop-color="#6aa884"/></radialGradient></defs><path d="M6.8 10.8 L1.3 16.7" stroke="#0c0c0c" stroke-width="2.5" stroke-linecap="round"/><circle cx="9.9" cy="6.5" r="5.6" fill="url(#mg)" stroke="#6f9c80" stroke-width="1.2"/><path d="M6.6 6 C7.6 3.6 11.8 3 13.4 5.2 C11.8 4.9 10.6 7 8.6 6.2 C7.9 5.9 7.3 6.3 6.6 6Z" fill="#62aa7c" opacity="0.8"/><path d="M6 4.2 C7.2 2.2 10.6 1.6 12.6 2.9" stroke="#effff4" stroke-width="1" fill="none"/></svg></div>
<div class="cb" style="left:1549px;top:879px"></div>
<div class="in " style="left:1658px;top:876px;width:89px;height:16px;line-height:14px;text-align:right;padding-right:1.5px">6.00</div>
<div class="in " style="left:1795px;top:876px;width:59px;height:16px;line-height:14px;text-align:left;padding-left:2px">ad</div>
<div class="c" style="left:2px;top:897px;width:92px;height:19px"></div>
<div class="c" style="left:95px;top:897px;width:658px;height:19px"></div>
<div class="c" style="left:754px;top:897px;width:92px;height:19px"></div>
<div class="c" style="left:847px;top:897px;width:280px;height:19px"></div>
<div class="c" style="left:1128px;top:897px;width:152px;height:19px"></div>
<div class="c" style="left:1281px;top:897px;width:74px;height:19px"></div>
<div class="c" style="left:1356px;top:897px;width:148px;height:19px"></div>
<div class="c" style="left:1505px;top:897px;width:92px;height:19px"></div>
<div class="c" style="left:1598px;top:897px;width:149px;height:19px"></div>
<div class="c" style="left:1748px;top:897px;width:148px;height:19px"></div>
<div class="t ar" style="left:7.5px;top:898px;height:13px;line-height:13px;">8</div>
<div class="in it" style="left:98px;top:897px;width:441px;height:16px;line-height:14px;text-align:left;padding-left:3px"><span class="sp g"><span class="sq">Bolivina</span> <span class="sq">alata</span></span></div>
<div class="btn sm" style="left:755px;top:899px;width:15px;height:13px;line-height:13px">&lt;</div>
<div class="t tur" style="left:1001.5px;top:900px;height:14px;line-height:14px;"><span class="sq">Bolivinitidae</span></div>
<div class="btn sm" style="left:1108px;top:897px;width:16.5px;height:13.5px;line-height:13px">&gt;</div>
<div class="in " style="left:1131px;top:897px;width:149px;height:16px;line-height:14px;text-align:left;padding-left:2px">Mehmet <span class="sq">Sakınç</span></div>
<div class="ic" style="left:1311px;top:898px"><svg width="18" height="18" viewBox="0 0 18 18"><path d="M7 0.4 L16 3.5 L16.8 7 L11.8 17.4 L1.2 13 L4.4 6.3 Z" fill="#3b6dc7"/><path d="M16 3.5 L16.8 7 L11.8 17.4 L10.4 16.8 L15.3 6.4 Z" fill="#7db0ec"/><path d="M7 0.4 L16 3.5 L15.3 6.4 L5.8 3 Z" fill="#2e5cb2"/><path d="M1.2 13 L11.8 17.4 L10.4 16.8 L1.8 12 Z" fill="#2a55a8"/><path d="M0.8 1.6 L8.9 9.5" stroke="#b8d6f2" stroke-width="1.9"/><path d="M0.6 1.4 L2.8 3.6" stroke="#7e9cba" stroke-width="1.9"/></svg></div>
<div class="ic" style="left:1362px;top:898px"><svg width="17" height="18" viewBox="0 0 17 18"><defs><radialGradient id="mg" cx="0.4" cy="0.35" r="0.7"><stop offset="0" stop-color="#d4f2de"/><stop offset="0.6" stop-color="#9ad0ae"/><stop offset="1" stop-color="#6aa884"/></radialGradient></defs><path d="M6.8 10.8 L1.3 16.7" stroke="#0c0c0c" stroke-width="2.5" stroke-linecap="round"/><circle cx="9.9" cy="6.5" r="5.6" fill="url(#mg)" stroke="#6f9c80" stroke-width="1.2"/><path d="M6.6 6 C7.6 3.6 11.8 3 13.4 5.2 C11.8 4.9 10.6 7 8.6 6.2 C7.9 5.9 7.3 6.3 6.6 6Z" fill="#62aa7c" opacity="0.8"/><path d="M6 4.2 C7.2 2.2 10.6 1.6 12.6 2.9" stroke="#effff4" stroke-width="1" fill="none"/></svg></div>
<div class="cb" style="left:1549px;top:900px"></div>
<div class="in " style="left:1658px;top:897px;width:89px;height:16px;line-height:14px;text-align:right;padding-right:1.5px">3.00</div>
<div class="in " style="left:1795px;top:897px;width:59px;height:16px;line-height:14px;text-align:left;padding-left:2px">ad</div>
<div class="c" style="left:2px;top:917px;width:92px;height:20px"></div>
<div class="c" style="left:95px;top:917px;width:658px;height:20px"></div>
<div class="c" style="left:754px;top:917px;width:92px;height:20px"></div>
<div class="c" style="left:847px;top:917px;width:280px;height:20px"></div>
<div class="c" style="left:1128px;top:917px;width:152px;height:20px"></div>
<div class="c" style="left:1281px;top:917px;width:74px;height:20px"></div>
<div class="c" style="left:1356px;top:917px;width:148px;height:20px"></div>
<div class="c" style="left:1505px;top:917px;width:92px;height:20px"></div>
<div class="c" style="left:1598px;top:917px;width:149px;height:20px"></div>
<div class="c" style="left:1748px;top:917px;width:148px;height:20px"></div>
<div class="t ar" style="left:7.5px;top:918px;height:13px;line-height:13px;">9</div>
<div class="in it" style="left:98px;top:917px;width:441px;height:16px;line-height:14px;text-align:left;padding-left:3px"><span class="sp g">Ammonia <span class="sq">beccarii</span></span></div>
<div class="btn sm" style="left:755px;top:919px;width:15px;height:13px;line-height:13px">&lt;</div>
<div class="t tur" style="left:1001.5px;top:920px;height:14px;line-height:14px;"><span class="sq">Ammoniidae</span></div>
<div class="btn sm" style="left:1108px;top:917px;width:16.5px;height:13.5px;line-height:13px">&gt;</div>
<div class="in " style="left:1131px;top:917px;width:149px;height:16px;line-height:14px;text-align:left;padding-left:2px">Mehmet <span class="sq">Sakınç</span></div>
<div class="ic" style="left:1311px;top:918px"><svg width="18" height="18" viewBox="0 0 18 18"><path d="M7 0.4 L16 3.5 L16.8 7 L11.8 17.4 L1.2 13 L4.4 6.3 Z" fill="#3b6dc7"/><path d="M16 3.5 L16.8 7 L11.8 17.4 L10.4 16.8 L15.3 6.4 Z" fill="#7db0ec"/><path d="M7 0.4 L16 3.5 L15.3 6.4 L5.8 3 Z" fill="#2e5cb2"/><path d="M1.2 13 L11.8 17.4 L10.4 16.8 L1.8 12 Z" fill="#2a55a8"/><path d="M0.8 1.6 L8.9 9.5" stroke="#b8d6f2" stroke-width="1.9"/><path d="M0.6 1.4 L2.8 3.6" stroke="#7e9cba" stroke-width="1.9"/></svg></div>
<div class="ic" style="left:1362px;top:918px"><svg width="17" height="18" viewBox="0 0 17 18"><defs><radialGradient id="mg" cx="0.4" cy="0.35" r="0.7"><stop offset="0" stop-color="#d4f2de"/><stop offset="0.6" stop-color="#9ad0ae"/><stop offset="1" stop-color="#6aa884"/></radialGradient></defs><path d="M6.8 10.8 L1.3 16.7" stroke="#0c0c0c" stroke-width="2.5" stroke-linecap="round"/><circle cx="9.9" cy="6.5" r="5.6" fill="url(#mg)" stroke="#6f9c80" stroke-width="1.2"/><path d="M6.6 6 C7.6 3.6 11.8 3 13.4 5.2 C11.8 4.9 10.6 7 8.6 6.2 C7.9 5.9 7.3 6.3 6.6 6Z" fill="#62aa7c" opacity="0.8"/><path d="M6 4.2 C7.2 2.2 10.6 1.6 12.6 2.9" stroke="#effff4" stroke-width="1" fill="none"/></svg></div>
<div class="cb" style="left:1549px;top:920px"></div>
<div class="in " style="left:1658px;top:917px;width:89px;height:16px;line-height:14px;text-align:right;padding-right:1.5px">5.00</div>
<div class="in " style="left:1795px;top:917px;width:59px;height:16px;line-height:14px;text-align:left;padding-left:2px">ad</div>
<div class="c" style="left:2px;top:938px;width:92px;height:20px"></div>
<div class="c" style="left:95px;top:938px;width:658px;height:20px"></div>
<div class="c" style="left:754px;top:938px;width:92px;height:20px"></div>
<div class="c" style="left:847px;top:938px;width:280px;height:20px"></div>
<div class="c" style="left:1128px;top:938px;width:152px;height:20px"></div>
<div class="c" style="left:1281px;top:938px;width:74px;height:20px"></div>
<div class="c" style="left:1356px;top:938px;width:148px;height:20px"></div>
<div class="c" style="left:1505px;top:938px;width:92px;height:20px"></div>
<div class="c" style="left:1598px;top:938px;width:149px;height:20px"></div>
<div class="c" style="left:1748px;top:938px;width:148px;height:20px"></div>
<div class="t ar" style="left:7.5px;top:939px;height:13px;line-height:13px;">10</div>
<div class="in it" style="left:98px;top:938px;width:441px;height:16px;line-height:14px;text-align:left;padding-left:3px"><span class="sp g"><span class="sq">Oolina</span> globosa</span></div>
<div class="btn sm" style="left:755px;top:940px;width:15px;height:13px;line-height:13px">&lt;</div>
<div class="t tur" style="left:1001.5px;top:941px;height:14px;line-height:14px;"><span class="sq">Ellipsolagenidae</span></div>
<div class="btn sm" style="left:1108px;top:938px;width:16.5px;height:13.5px;line-height:13px">&gt;</div>
<div class="in " style="left:1131px;top:938px;width:149px;height:16px;line-height:14px;text-align:left;padding-left:2px">Mehmet <span class="sq">Sakınç</span></div>
<div class="ic" style="left:1311px;top:939px"><svg width="18" height="18" viewBox="0 0 18 18"><path d="M7 0.4 L16 3.5 L16.8 7 L11.8 17.4 L1.2 13 L4.4 6.3 Z" fill="#3b6dc7"/><path d="M16 3.5 L16.8 7 L11.8 17.4 L10.4 16.8 L15.3 6.4 Z" fill="#7db0ec"/><path d="M7 0.4 L16 3.5 L15.3 6.4 L5.8 3 Z" fill="#2e5cb2"/><path d="M1.2 13 L11.8 17.4 L10.4 16.8 L1.8 12 Z" fill="#2a55a8"/><path d="M0.8 1.6 L8.9 9.5" stroke="#b8d6f2" stroke-width="1.9"/><path d="M0.6 1.4 L2.8 3.6" stroke="#7e9cba" stroke-width="1.9"/></svg></div>
<div class="ic" style="left:1362px;top:939px"><svg width="17" height="18" viewBox="0 0 17 18"><defs><radialGradient id="mg" cx="0.4" cy="0.35" r="0.7"><stop offset="0" stop-color="#d4f2de"/><stop offset="0.6" stop-color="#9ad0ae"/><stop offset="1" stop-color="#6aa884"/></radialGradient></defs><path d="M6.8 10.8 L1.3 16.7" stroke="#0c0c0c" stroke-width="2.5" stroke-linecap="round"/><circle cx="9.9" cy="6.5" r="5.6" fill="url(#mg)" stroke="#6f9c80" stroke-width="1.2"/><path d="M6.6 6 C7.6 3.6 11.8 3 13.4 5.2 C11.8 4.9 10.6 7 8.6 6.2 C7.9 5.9 7.3 6.3 6.6 6Z" fill="#62aa7c" opacity="0.8"/><path d="M6 4.2 C7.2 2.2 10.6 1.6 12.6 2.9" stroke="#effff4" stroke-width="1" fill="none"/></svg></div>
<div class="cb" style="left:1549px;top:941px"></div>
<div class="in " style="left:1658px;top:938px;width:89px;height:16px;line-height:14px;text-align:right;padding-right:1.5px">3.00</div>
<div class="in " style="left:1795px;top:938px;width:59px;height:16px;line-height:14px;text-align:left;padding-left:2px">ad</div>
</body></html>
